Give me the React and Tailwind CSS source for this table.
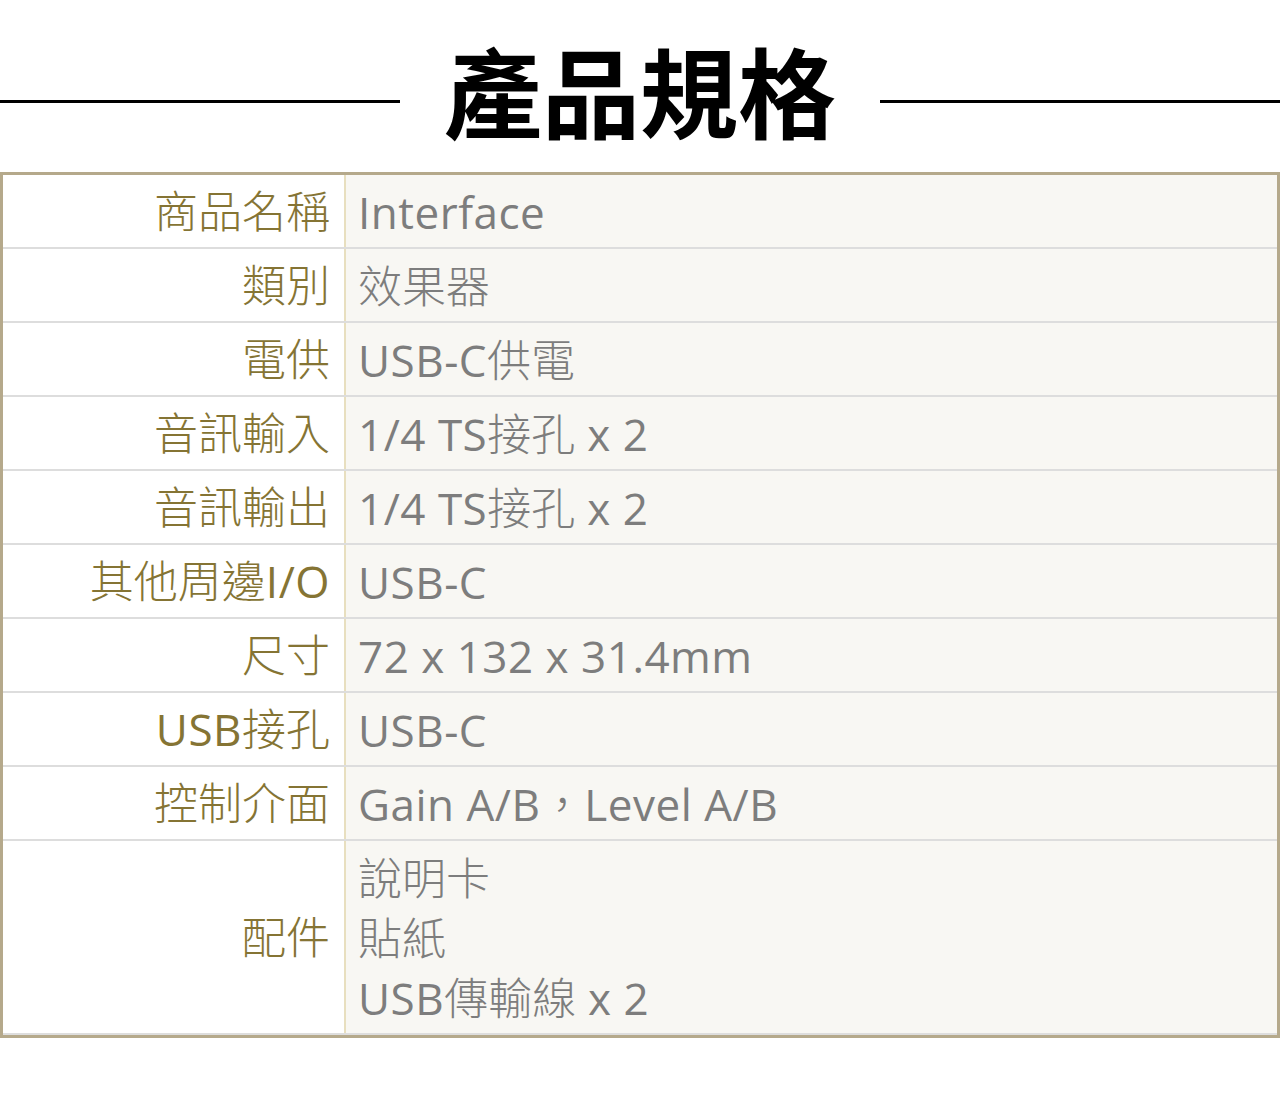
const rows = [
  { label: '商品名稱', value: ['Interface'] },
  { label: '類別', value: ['效果器'] },
  { label: '電供', value: ['USB-C供電'] },
  { label: '音訊輸入', value: ['1/4 TS接孔 x 2'] },
  { label: '音訊輸出', value: ['1/4 TS接孔 x 2'] },
  { label: '其他周邊I/O', value: ['USB-C'] },
  { label: '尺寸', value: ['72 x 132 x 31.4mm'] },
  { label: 'USB接孔', value: ['USB-C'] },
  { label: '控制介面', value: ['Gain A/B，Level A/B'] },
  { label: '配件', value: ['說明卡', '貼紙', 'USB傳輸線 x 2'] },
]

// CJK runs look lighter than the latin ones in the original font
const Txt = ({ text }) =>
  text.match(/[\u3000-\u9fff\uff00-\uffef]+|[^\u3000-\u9fff\uff00-\uffef]+/g).map((part, i) =>
    /[\u3000-\u9fff\uff00-\uffef]/.test(part) ? (
      <span key={i} className="font-light">{part}</span>
    ) : (
      <span key={i} className="font-normal tracking-[0.5px]">{part}</span>
    )
  )

const SpecRow = ({ label, value }) => {
  const multi = value.length > 1
  return (
    <div className="flex border-b-2 border-[#dddddd]">
      <div className="w-[341px] shrink-0 bg-white flex items-center justify-end pr-[14px] text-[#857434]">
        <Txt text={label} />
      </div>
      <div
        className={
          multi
            ? 'flex-1 border-l-2 border-[#e8dfbf] bg-[#f8f7f3] pl-[12px] pt-[7px] pb-[5px] text-[#7d7d7d] leading-[60px]'
            : 'flex-1 h-[72px] flex items-center pt-[2px] border-l-2 border-[#e8dfbf] bg-[#f8f7f3] pl-[12px] text-[#7d7d7d]'
        }
      >
        {multi ? (
          value.map((v) => (
            <div key={v}>
              <Txt text={v} />
            </div>
          ))
        ) : (
          <span>
            <Txt text={value[0]} />
          </span>
        )}
      </div>
    </div>
  )
}

export default function App() {
  return (
    <div className="w-[1280px] bg-white font-['Noto_Sans_CJK_TC',sans-serif]">
      <div className="h-[172px] flex items-center pt-[30px]">
        <div className="flex-1 h-[3px] bg-black" />
        <h1 className="px-[44px] -mt-[26px] text-[98px] leading-none font-bold text-black">
          產品規格
        </h1>
        <div className="flex-1 h-[3px] bg-black" />
      </div>
      <div className="border-[3px] border-[#b5a98b] text-[44px] leading-none font-['Open_Sans','Noto_Sans_CJK_TC',sans-serif]">
        {rows.map((r) => (
          <SpecRow key={r.label} {...r} />
        ))}
      </div>
    </div>
  )
}
